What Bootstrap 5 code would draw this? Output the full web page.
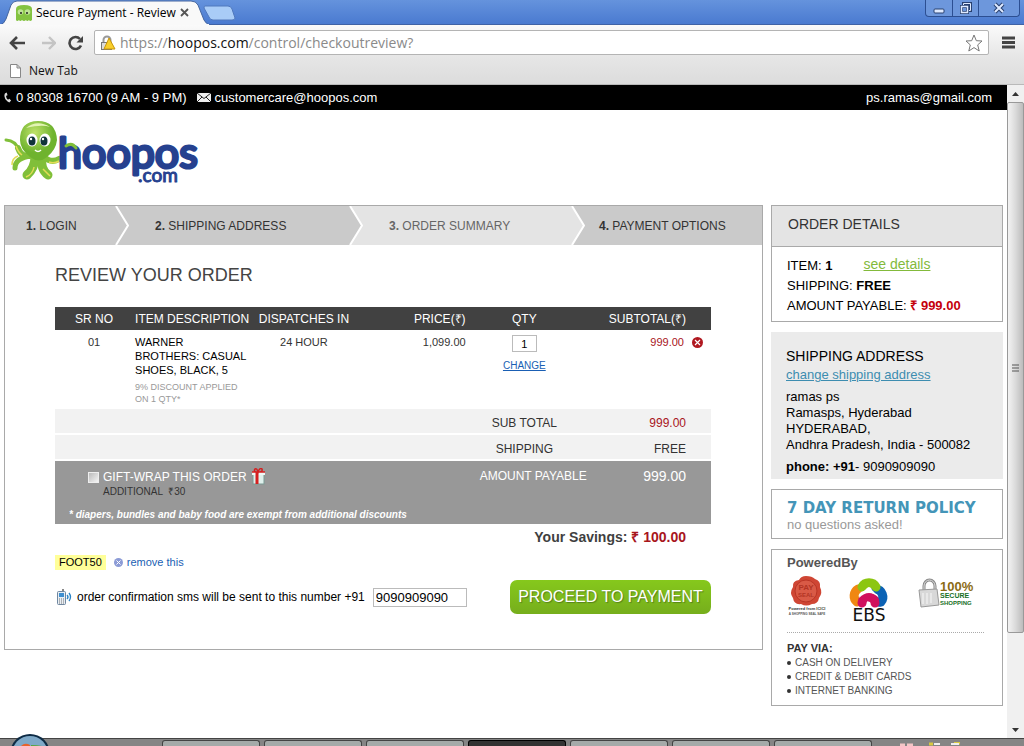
<!DOCTYPE html>
<html lang="en">
<head>
<meta charset="utf-8">
<meta name="viewport" content="width=device-width, initial-scale=1">
<title>Secure Payment - Review</title>
<link href="https://cdn.jsdelivr.net/npm/bootstrap@5.3.0/dist/css/bootstrap.min.css" rel="stylesheet">
<script src="https://cdn.jsdelivr.net/npm/bootstrap@5.3.0/dist/js/bootstrap.bundle.min.js" defer></script>
<style>
body{font:12px/16px "Liberation Sans",Arial,sans-serif;color:#000;background:#fff}
svg{display:block;flex:none}
button{font-family:inherit}
.chrome-ui{font-family:"Open Sans","Noto Sans",sans-serif}
.tabstrip{height:25px;background:linear-gradient(#6593dd,#4a7ad0);border-bottom:1px solid #3f62a5;padding-left:36px;position:relative}
.tab-shape{position:absolute;left:0;top:0}
.tab-title{position:relative;width:140px;white-space:nowrap;line-height:25px}
.bare{border:0;background:none;padding:0}
.tab-close{position:relative;margin-left:4px}
.win-btns{position:absolute;right:4px;top:0;height:17px;border:1px solid #2c4f92;border-top:0;border-radius:0 0 4px 4px;background:#6d97dc}
.win-btns button{width:26px;display:flex;justify-content:center;align-items:center}
.win-btns button+button{border-left:1px solid #2c4f92}
.win-btns button:last-child{width:41px}
.toolbar{background:linear-gradient(#fafafa,#e6e6e6);padding:5px 9px 2px}
.omnibox{height:25px;border:1px solid #b4b4b4;border-radius:2px;background:#fff;padding:0 5px;margin-right:13px}
.omnibox .url{font-size:14px;line-height:23px;color:#8a8a8a;outline:0}
.omnibox .url b{font-weight:400;color:#111}
.bookmarks{height:28px;background:linear-gradient(#e6e6e6,#dcdcdc);border-bottom:1px solid #b9b9b9;padding-left:10px}
.bookmarks a{color:#111}
.contact-bar{height:25px;background:#000;color:#fff;padding:0 15px 0 4px;font-size:13px;line-height:25px}
.contact-bar a{color:#fff}
.logo-row{height:95px;padding:8px 4px}
.main-row{padding:0 4px;gap:8px}
.panel{border:1px solid #a9a9a9}
.steps{height:39px;background:#cacaca;color:#333;font-size:12px;line-height:40px;white-space:nowrap}
.steps .s1{flex:89 0 0;padding-left:21px}
.steps .s2{flex:194 0 0;padding-left:26px}
.steps .s3{flex:182 0 0;padding-left:26px;background:#e4e4e4;color:#666;height:39px}
.steps .s4{flex:163 0 0;padding-left:14px}
.order{padding:20px 51px 35px 50px}
.order h1{font-size:18px;line-height:20px;color:#444;font-weight:400;margin:0 0 22px}
.items{width:100%;table-layout:fixed;color:#333;border-collapse:collapse}
.items th{font-weight:400}
.items thead th{background:#414141;color:#fff;height:23px;line-height:22px;padding:1px 0 0;white-space:nowrap}
.items tbody td{font-size:11px;line-height:14px;vertical-align:top;padding:5px 0 2px}
.items .desc{padding-left:2px!important}
.items .price-end{padding-right:25px!important}
.fine{font-size:9px;line-height:12px;color:#999;margin-top:4px}
.qty{width:25px;height:17px;border:1px solid #bbb;font-size:11px;text-align:center;padding:0;display:block;margin:0 auto 6px}
.qty-link{color:#1a5fb4;text-decoration:underline;font-size:10px}
.red{color:#a8151c}
.items .sum th,.items .sum td{background:#f2f2f2;border-top:2px solid #fff;height:25px;line-height:20px;padding:4px 0 0;font-size:12px}
.items .grand th,.items .grand td{background:#989898;border-top:2px solid #fff;color:#fff;vertical-align:top;padding:7px 0 0;height:64px}
.items .grand th{padding-left:14px}
.items .grand .grand-sum{font-size:14px}
.grand input{width:11px;height:11px;margin:1px 4px 0 0;appearance:none;border:1px solid #eee;background:linear-gradient(135deg,#bbb,#f4f4f4)}
.grand .wrap-row{padding-left:33px;height:17px;font-size:12px}
.grand .extra{padding-left:48px;font-size:10px;line-height:14px;color:#333}
.grand .note{padding-left:14px;font-size:10px;line-height:14px;font-weight:700;font-style:italic;margin-top:9px}
.savings{font-size:14px;line-height:18px;font-weight:700;color:#3f3f3f;padding:4px 25px 0 0}
.coupon{background:#ffff99;padding:0 4px;font-size:11px;line-height:15px}
.coupon-row a{color:#1a5fb4;font-size:11px}
.sms{padding-top:10px}
.sms input{width:94px;height:19px;border:1px solid #bbb;padding:0 2px;font-size:13px}
.pay-btn{width:201px;height:34px;border:0;border-radius:7px;background:linear-gradient(#86c81c,#76ae1c);color:#fff;font-size:16px;text-shadow:1px 1px 1px #55801a;white-space:nowrap;padding:0}
.side{flex:0 0 232px;gap:10px}
.side h2{font-size:14px;font-weight:400;margin:0}
.side .head{height:41px;background:#e4e4e4;border-bottom:1px solid #a9a9a9;color:#333;padding:8px 16px;line-height:20px}
.details{padding:9px 15px 5px;font-size:13px;line-height:20px}
.details .more{color:#83ba3b;font-size:14px;text-decoration:underline;line-height:16px;margin-left:31px}
.ship{background:#ebebeb;padding:14px 15px 4px;line-height:16px;font-size:13px}
.ship h2{line-height:20px;margin-bottom:1px}
.ship a{color:#3d8db0;text-decoration:underline}
.ship address{margin:6px 0}
.policy{padding:10px 15px 5px;height:50px;line-height:16px;color:#999;font-size:13px}
.policy h2{font:700 15px/17px "DejaVu Sans",Verdana,sans-serif;color:#4495b8;white-space:nowrap}
.powered{padding:5px 15px 7px}
.powered h3{font-size:13px;line-height:16px;font-weight:700;color:#555;margin:0 0 5px}
.seals{height:57px;border-bottom:1px dotted #aaa;margin-right:3px;margin-bottom:7px}
.powered h4{font-size:11px;line-height:16px;font-weight:700;color:#333;margin:0}
.powered ul{list-style:none;margin:0;padding:0;font-size:10px;line-height:14px;color:#555}
.powered li{display:flex;align-items:center;gap:4px}
.powered li::before{content:"";width:4px;height:4px;border-radius:2px;background:#333}
.scroller{width:17px;background:#f0f0f0;flex:none}
.scroller .end{height:17px;display:flex;align-items:center;justify-content:center}
.thumb{flex:530 0 0;border:1px solid #999;border-radius:2px;background:linear-gradient(90deg,#f3f3f3,#dadada 50%,#bcbcbc);display:flex;align-items:center;justify-content:center}
.rest{flex:88 0 0}
.taskbar{height:8px;background:#858585;border-top:1px solid #444;position:relative;padding-left:162px;gap:4px}
.orb{position:absolute;left:9px;bottom:0}
.task{flex:0 0 98px;height:6px;border:1px solid #444;border-bottom:0;border-radius:3px 3px 0 0;background:#a5aaa9}
.task.on{background:#333;border-color:#000}
.tray{margin-left:22px}
</style>
</head>
<body class="d-flex flex-column min-vh-100">
<header class="chrome-ui">
  <div class="tabstrip d-flex align-items-center">
    <svg class="tab-shape" width="240" height="25" viewBox="0 0 240 25"><path d="M0 25Q4 24 6 19L11 5Q13 1 17 1H191Q196 1 198 5L204 20Q206 24 210 25Z" fill="#f9f9f9" stroke="#44659f"/><path d="M0 24.500H209" stroke="#f9f9f9"/><path d="M205 6H228Q231 6 232 9L235 18Q235 20 232 20H213Q210 20 209 17L204 8Q204 6 205 6Z" fill="#a9ccf7" stroke="#5078bd"/>
      <path d="M16 20V9Q16 5 24 5T32 9V20Q30 22 29 20Q27 22 26 20Q24 22 22 20Q20 22 19 20Q17 22 16 20Z" fill="#84c341"/><circle cx="20.500" cy="12" r="2.800" fill="#bde394"/><circle cx="27.500" cy="12" r="2.800" fill="#bde394"/><circle cx="21" cy="13" r="1" fill="#222"/><circle cx="27" cy="13" r="1" fill="#222"/></svg>
    <span class="tab-title">Secure Payment - Review</span>
    <button class="bare tab-close" aria-label="Close tab"><svg width="9" height="9" viewBox="0 0 9 9"><path d="M1 1L8 8M8 1L1 8" stroke="#555" stroke-width="1.800"/></svg></button>
    <div class="win-btns d-flex">
      <button class="bare" aria-label="Minimize"><svg width="12" height="12"><rect x="1" y="7" width="10" height="4" rx="1" fill="#dfeaff" stroke="#28406f"/></svg></button>
      <button class="bare" aria-label="Restore"><svg width="13" height="13" fill="none"><path d="M4.500 3.500V1.500H11.500V8.500H9.500" stroke="#28406f" stroke-width="3"/><path d="M4.500 3.500V1.500H11.500V8.500H9.500" stroke="#dfeaff"/><rect x="2.500" y="4.500" width="6" height="6" stroke="#28406f" stroke-width="3"/><rect x="2.500" y="4.500" width="6" height="6" stroke="#dfeaff" stroke-width="1.500"/></svg></button>
      <button class="bare" aria-label="Close"><svg width="12" height="12"><path d="M2 2L10 10M10 2L2 10" stroke="#28406f" stroke-width="4"/><path d="M2 2L10 10M10 2L2 10" stroke="#dfeaff" stroke-width="2"/></svg></button>
    </div>
  </div>
  <div class="toolbar d-flex align-items-center">
    <button class="bare" aria-label="Back"><svg width="17" height="16" viewBox="0 0 17 16"><path d="M8 2L2 8L8 14M2 8H16" fill="none" stroke="#444" stroke-width="2.600"/></svg></button>
    <button class="bare ms-3" aria-label="Forward"><svg width="14" height="16" viewBox="0 0 14 16"><path d="M7 2L13 8L7 14M13 8H-2" fill="none" stroke="#c4c4c4" stroke-width="2.400"/></svg></button>
    <button class="bare ms-2 me-2" aria-label="Reload"><svg class="ms-1" width="18" height="16" viewBox="0 0 18 16"><path d="M13 10.500A6 6 0 1 1 12 4" fill="none" stroke="#444" stroke-width="2.600"/><path d="M15 1V7.500H8.500Z" fill="#444"/></svg></button>
    <div class="omnibox d-flex align-items-center flex-grow-1">
      <svg class="me-1" width="16" height="16" viewBox="0 0 16 16"><path d="M3.500 8V5A3.500 3.500 0 0 1 10.500 5V8" fill="none" stroke="#999" stroke-width="2"/><rect x="1.500" y="7.500" width="10" height="7" fill="#ddd" stroke="#777"/><path d="M9 3L15 14H4Z" fill="#f9cf2a" stroke="#c9960c"/></svg>
      <div class="url flex-grow-1" role="textbox" aria-label="Address" contenteditable="true">https://<b>hoopos.com</b>/control/checkoutreview?</div>
      <button class="bare" aria-label="Bookmark"><svg width="18" height="18" viewBox="0 0 18 18"><path d="M9 1L11.300 6.700L17 7L12.700 10.900L14.200 17L9 13.600L3.800 17L5.300 10.900L1 7L6.700 6.700Z" fill="#fff" stroke="#777"/></svg></button>
    </div>
    <button class="bare" aria-label="Menu"><svg width="13" height="13" viewBox="0 0 13 13"><path d="M0 2H13M0 6.500H13M0 11H13" stroke="#444" stroke-width="2.800"/></svg></button>
  </div>
  <nav class="bookmarks d-flex align-items-center"><svg width="11" height="14" viewBox="0 0 11 14"><path d="M.5.500H7L10.500 4V13.500H.5ZM7 .500V4H10.500" fill="#fff" stroke="#888"/></svg><a class="text-decoration-none ms-2" href="#">New Tab</a></nav>
</header>
<div class="d-flex flex-grow-1">
<div class="flex-grow-1">
  <div class="contact-bar d-flex align-items-center">
    <svg width="8" height="11" viewBox="0 0 9 11"><path d="M3 0L1 1Q-1 6 4 10L6 11L8 9L6 7L4.500 8Q2 6 2.500 3.500L4 3Z" fill="#ddd"/></svg>
    <span class="ms-1 me-1">0 80308 16700 (9 AM - 9 PM)</span>
    <svg class="mx-1" width="16" height="9" viewBox="-2 0 16 9"><rect width="14" height="9" fill="#eee"/><path d="M0 0L7 5.500L14 0M0 9L5 4M14 9L9 4" fill="none" stroke="#222"/></svg>
    <a class="text-decoration-none" href="#">customercare@hoopos.com</a>
    <a class="text-decoration-none ms-auto" href="#">ps.ramas@gmail.com</a>
  </div>
  <div class="logo-row"><a href="#" class="d-inline-block">
    <svg width="196" height="68" viewBox="0 0 196 68" role="img" aria-label="hoopos.com">
      <defs><radialGradient id="g" cx=".4" cy=".3"><stop offset="0" stop-color="#bfe26a"/><stop offset="1" stop-color="#6fb32e"/></radialGradient></defs>
      <g fill="none" stroke="#80bf39" stroke-linecap="round"><path d="M25 38Q16 39 14 31T2 22" stroke-width="3"/><path d="M25 38Q17 39 14 30" stroke-width="6"/><path d="M27 38Q11 40 11 50" stroke-width="5"/><path d="M31 38Q31 50 23 57" stroke-width="9"/><path d="M38 38Q36 51 44 57" stroke-width="9"/><path d="M39 38Q47 46 55 41" stroke-width="6"/></g>
      <path d="M8 47Q8 40 14 38M12 28Q14 34 18 37M22 59Q29 56 30 49M46 58L39 51M45 44Q50 46 55 43" fill="none" stroke="#e3dc55" stroke-width="1.500"/>
      <path d="M16 22Q16 3 34 3T53 22Q52 32 43 39Q35 46 26 39Q16 31 16 22Z" fill="url(#g)"/>
      <path d="M22 10Q33 1 46 9Q38 6 22 10Z" fill="#e3f4b4"/>
      <ellipse cx="28" cy="22" rx="5.500" ry="6.500" fill="#fff"/><ellipse cx="41" cy="22" rx="5.500" ry="6.500" fill="#fff"/><ellipse cx="28" cy="23" rx="3.500" ry="4.500" fill="#10333a"/><ellipse cx="40" cy="23" rx="3.500" ry="4.500" fill="#10333a"/><circle cx="27" cy="21" r="1.200" fill="#fff"/><circle cx="39" cy="21" r="1.200" fill="#fff"/><path d="M31 32Q34 35 37 32" fill="none" stroke="#fff" stroke-width="1.500"/>
      <g fill="#26418f" stroke="#26418f" stroke-linejoin="round" font-family="Lato, sans-serif"><text x="54" y="50" font-size="43" stroke-width="3">hoopos</text><text x="134" y="64" font-size="19" stroke-width="1">.com</text></g>
      <path d="M62 28Q68 24 72 30" fill="none" stroke="#80bf39" stroke-width="3" stroke-linecap="round"/>
    </svg></a></div>
  <div class="main-row d-flex align-items-start">
    <main class="panel flex-grow-1">
      <div class="steps d-flex">
        <div class="s1"><b>1.</b> LOGIN</div>
        <svg width="14" height="39" viewBox="0 0 14 39"><path d="M1 0L13 19.500L1 39" fill="none" stroke="#fff" stroke-width="2"/></svg>
        <div class="s2"><b>2.</b> SHIPPING ADDRESS</div>
        <svg width="14" height="39" viewBox="0 0 14 39"><path d="M1 0H14V39H1L13 19.500Z" fill="#e4e4e4"/><path d="M1 0L13 19.500L1 39" fill="none" stroke="#fff" stroke-width="2"/></svg>
        <div class="s3"><b>3.</b> ORDER SUMMARY</div>
        <svg width="14" height="39" viewBox="0 0 14 39"><path d="M0 0H1L13 19.500L1 39H0Z" fill="#e4e4e4"/><path d="M1 0L13 19.500L1 39" fill="none" stroke="#fff" stroke-width="2"/></svg>
        <div class="s4"><b>4.</b> PAYMENT OPTIONS</div>
      </div>
      <div class="order">
        <h1>REVIEW YOUR ORDER</h1>
        <table class="items">
          <colgroup><col style="width:11.900%"><col style="width:18.900%"><col style="width:14.300%"><col style="width:17.500%"><col style="width:17.900%"><col style="width:19.500%"></colgroup>
          <thead><tr><th class="text-center">SR NO</th><th class="desc">ITEM DESCRIPTION</th><th class="text-center">DISPATCHES IN</th><th class="text-end">PRICE(₹)</th><th class="text-center">QTY</th><th class="text-end price-end">SUBTOTAL(₹)</th></tr></thead>
          <tbody><tr>
            <td class="text-center">01</td>
            <td class="desc text-black">WARNER<br>BROTHERS: CASUAL<br>SHOES, BLACK, 5<div class="fine">9% DISCOUNT APPLIED<br>ON 1 QTY*</div></td>
            <td class="text-center">24 HOUR</td>
            <td class="text-end">1,099.00</td>
            <td class="text-center"><input class="qty" value="1" aria-label="Quantity"><a class="qty-link" href="#">CHANGE</a></td>
            <td class="red"><div class="d-flex justify-content-end align-items-center pe-1 me-1">999.00<button class="bare ms-2" aria-label="Remove item"><svg width="11" height="11" viewBox="0 0 11 11"><circle cx="5.500" cy="5.500" r="5.500" fill="#b01820"/><path d="M3 3L8 8M8 3L3 8" stroke="#fff" stroke-width="1.200"/></svg></button></div></td>
          </tr></tbody>
          <tfoot>
            <tr class="sum"><td colspan="4"></td><th class="text-center">SUB TOTAL</th><td class="text-end price-end red">999.00</td></tr>
            <tr class="sum"><td colspan="4"></td><th class="text-center">SHIPPING</th><td class="text-end price-end">FREE</td></tr>
            <tr class="grand"><td colspan="4">
              <div class="wrap-row d-flex align-items-center"><input type="checkbox" id="gift"><label for="gift">GIFT-WRAP THIS ORDER</label>
                <svg class="ms-1" width="15" height="17" viewBox="0 0 15 17"><rect x="2" y="6" width="11" height="10" fill="#dff0ec" stroke="#7a9a94"/><rect x="1" y="4" width="13" height="3" fill="#eef8f5"/><path d="M6 4V16" stroke="#d42020" stroke-width="3"/><path d="M1 4H14M7 4Q2 4 4 1Q6 0 7 4Q9 -1 11 1Q12 4 7 4" fill="none" stroke="#d42020" stroke-width="1.500"/></svg></div>
              <div class="extra">ADDITIONAL &nbsp;₹30</div>
              <div class="note">* diapers, bundles and baby food are exempt from additional discounts</div>
            </td><th class="text-center text-nowrap">AMOUNT PAYABLE</th><td class="text-end price-end grand-sum">999.00</td></tr>
          </tfoot>
        </table>
        <div class="savings text-end">Your Savings: <span class="red">₹ 100.00</span></div>
        <div class="coupon-row d-flex align-items-center mt-2"><span class="coupon">FOOT50</span><svg class="ms-2 me-1" width="9" height="9" viewBox="0 0 9 9"><circle cx="4.500" cy="4.500" r="4.500" fill="#8c9bd6"/><path d="M2.500 2.500L6.500 6.500M6.500 2.500L2.500 6.500" stroke="#fff"/></svg><a class="text-decoration-none" href="#">remove this</a></div>
        <div class="sms d-flex align-items-center">
          <svg width="18" height="16" viewBox="0 0 18 16"><path d="M8 0V3" stroke="#888" stroke-width="2"/><rect x="2.500" y="2.500" width="8" height="13" rx="1" fill="#e8eef4" stroke="#6f87a0"/><rect x="4" y="4" width="5" height="4" fill="#3f8fd0"/><path d="M4 10H9M4 12H9M4 14H9" stroke="#777" stroke-dasharray="1 1"/><path d="M12 6Q14 8 12 10M14 4Q17 8 14 12" fill="none" stroke="#2b84c6" stroke-width="1.300"/></svg>
          <label class="ms-1 me-2 text-nowrap" for="sms">order confirmation sms will be sent to this number +91</label><input id="sms" value="9090909090">
          <button class="pay-btn ms-auto">PROCEED TO PAYMENT</button>
        </div>
      </div>
    </main>
    <aside class="side d-flex flex-column">
      <section class="panel"><h2 class="head">ORDER DETAILS</h2>
        <div class="details"><div class="d-flex"><span>ITEM: <b>1</b></span><a class="more" href="#">see details</a></div><div>SHIPPING: <b>FREE</b></div><div class="text-nowrap">AMOUNT PAYABLE: <b style="color:#c4000b">₹ 999.00</b></div></div></section>
      <section class="ship"><h2>SHIPPING ADDRESS</h2><a href="#">change shipping address</a>
        <address>ramas ps<br>Ramasps, Hyderabad<br>HYDERABAD,<br>Andhra Pradesh, India - 500082</address><div><b>phone: +91</b>- 9090909090</div></section>
      <section class="panel policy"><h2>7 DAY RETURN POLICY</h2>no questions asked!</section>
      <section class="panel powered"><h3>PoweredBy</h3>
        <div class="seals d-flex align-items-start">
          <svg width="42" height="42" viewBox="0 0 42 42"><path d="M19 0Q25 0 28 3Q34 5 33 11Q36 17 32 22Q31 28 25 28Q19 31 14 28Q7 29 6 22Q2 17 6 11Q5 5 12 4Q14 0 19 0Z" fill="#cf4634"/><circle cx="19" cy="15" r="11" fill="#d95a46" stroke="#b93525"/><g font-family="Liberation Sans, sans-serif" font-weight="700" text-anchor="middle"><text x="19" y="14" font-size="8" fill="#b23424">PAY</text><text x="19" y="21" font-size="6" fill="#b23424">SEAL</text><text x="20" y="34" font-size="4" fill="#333">Powered from ICICI</text><text x="20" y="39" font-size="3" fill="#555">A SHOPPING SEAL SAFE</text></g></svg>
          <svg class="ms-3" width="48" height="50" viewBox="0 0 48 50"><g fill="none" stroke-width="9" stroke-linecap="round"><path d="M31 13A8 8 0 0 1 36 26Q33 27 31 25" stroke="#0b62b5"/><path d="M12 26A8 8 0 0 1 13 13" stroke="#f08712"/><path d="M17 11A8 8 0 0 1 31 11" stroke="#8cc611"/><path d="M17 27Q18 20 24 21Q30 22 30 27" stroke="#d0105d"/></g><path d="M24 11L29 16L34 22Q29 17 24 17T14 22Q16 16 19 15Z" fill="#fff"/><text x="24" y="45" text-anchor="middle" font-size="17" font-family="DejaVu Sans, sans-serif" fill="#111">EBS</text></svg>
          <svg class="ms-4" width="62" height="34" viewBox="0 -2 62 34"><path d="M7 14V8A5.500 6 0 0 1 18 8V14" fill="none" stroke="#888" stroke-width="3"/><path d="M7 14V8A5.500 6 0 0 1 18 8V14" fill="none" stroke="#ddd"/><path d="M2 12L20 11L22 27L4 29Z" fill="#d8d8d8" stroke="#999"/><path d="M6 15V26M10 15V26M14 15V25" stroke="#f8f8f8"/><g font-family="Liberation Sans, sans-serif" font-weight="700"><text x="23" y="13" font-size="13" fill="#8b6b14">100%</text><text x="23" y="20" font-size="7" fill="#17701f">SECURE</text><text x="23" y="27" font-size="6" fill="#17701f">SHOPPING</text></g></svg>
        </div>
        <h4>PAY VIA:</h4><ul><li>CASH ON DELIVERY</li><li>CREDIT &amp; DEBIT CARDS</li><li>INTERNET BANKING</li></ul></section>
    </aside>
  </div>
</div>
<div class="scroller d-flex flex-column"><div class="end"><svg width="7" height="4"><path d="M3.500 0L7 4H0Z" fill="#333"/></svg></div><div class="thumb"><svg width="7" height="8"><path d="M0 1H7M0 4H7M0 7H7" stroke="#555"/></svg></div><div class="rest"></div><div class="end"><svg width="7" height="4"><path d="M0 0H7L3.500 4Z" fill="#333"/></svg></div></div>
</div>
<footer class="taskbar d-flex align-items-end">
  <svg class="orb" width="42" height="12" viewBox="0 0 42 12"><circle cx="21" cy="20" r="20" fill="#0d2b45"/><circle cx="21" cy="20" r="18" fill="#7fa9c8"/><path d="M12 12Q16 8 21 11V12Z" fill="#e8622a"/><path d="M22 11Q28 11 33 12H22Z" fill="#58a53a"/></svg>
  <div class="task"></div><div class="task"></div><div class="task"></div><div class="task on"></div><div class="task"></div><div class="task"></div><div class="task"></div>
  <svg class="tray" width="76" height="4" viewBox="0 0 76 4"><path d="M2 3H7M9 3H15" stroke="#f4c6c6" stroke-width="3"/><path d="M31 2H35M56 1H62" stroke="#d8c840" stroke-width="3"/><path d="M36 2H42M53 2H61" stroke="#eee" stroke-width="2"/></svg>
</footer>
</body>
</html>
